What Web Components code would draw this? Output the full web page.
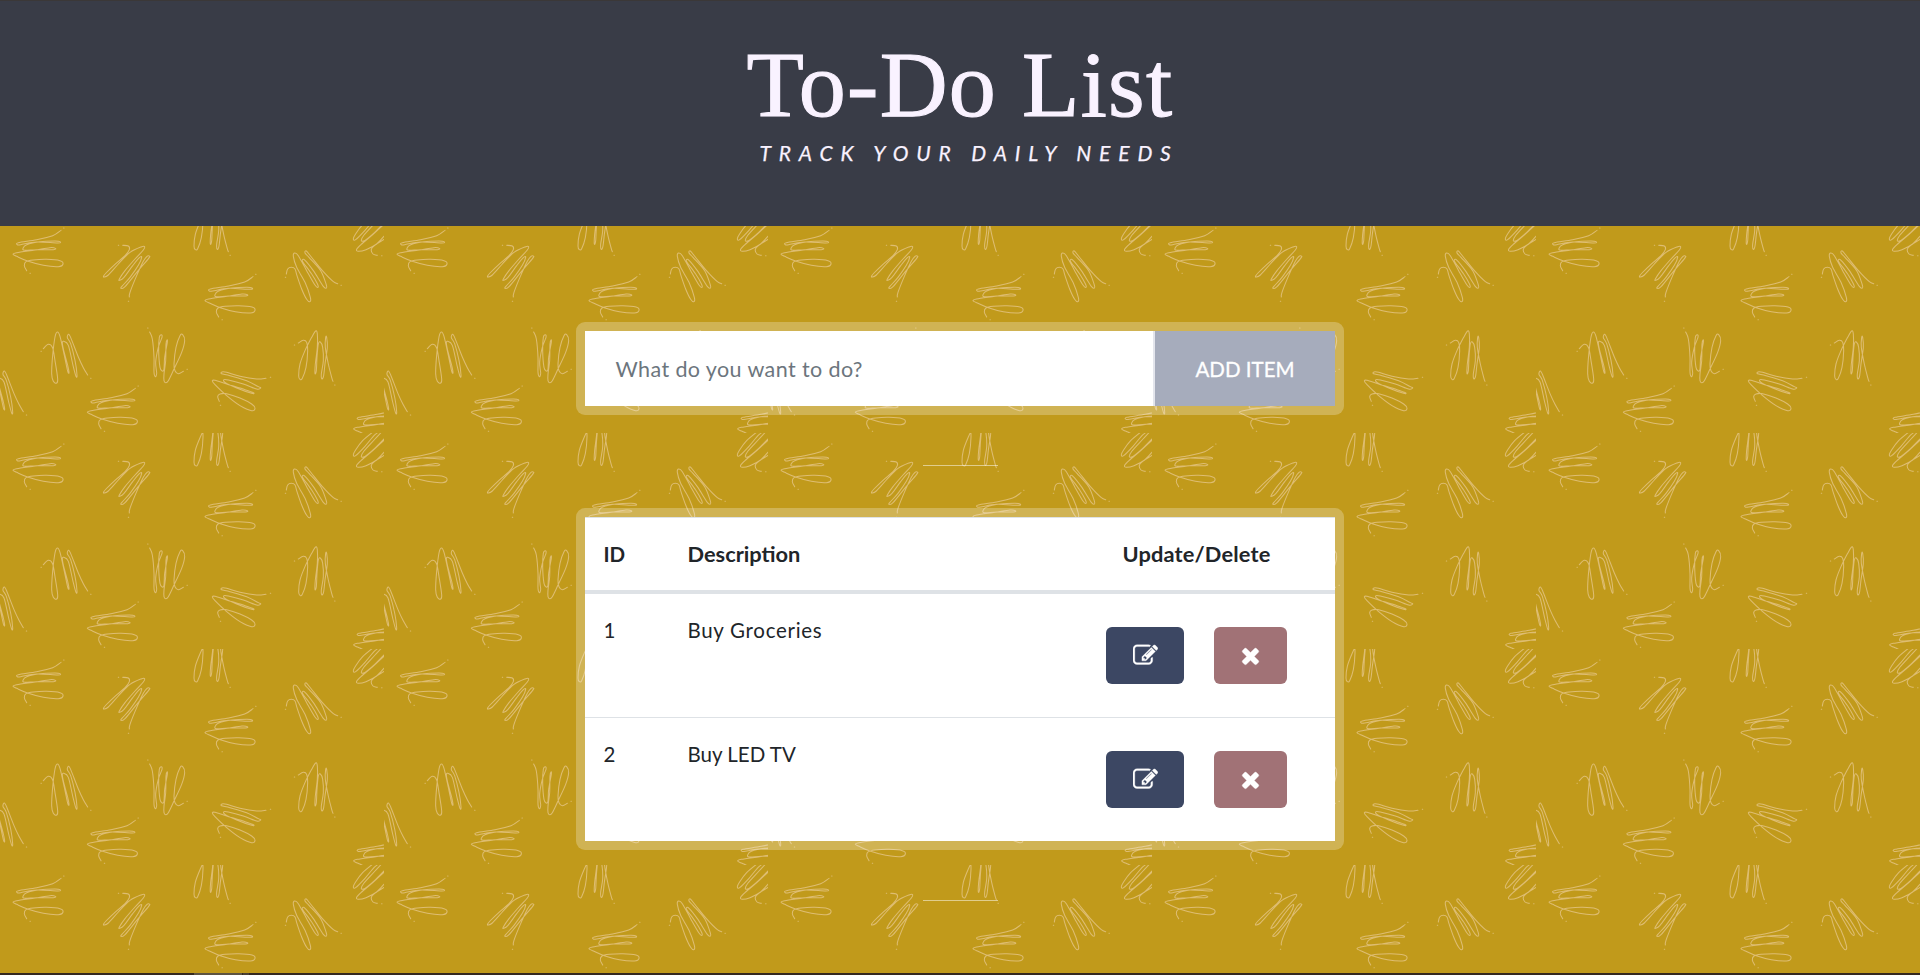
<!DOCTYPE html>
<html lang="en">
<head>
<meta charset="utf-8">
<title>To-Do List</title>
<style>
html,body{margin:0;height:100%;overflow:hidden}
body{font-family:Lato,"Noto Sans",sans-serif;font-size:20.5px;color:#212529}
</style>
</head>
<body>
<todo-app></todo-app>
<script>
// Scribble motifs: points are in thirds of a pixel; "dots" are the stray ink specks.
const MOTIFS = {
  flat: {dots:[[191,33],[90,169]], pts:[183,40,158,56,110,68,55,77,52,83,62,83,110,75,174,78,180,74,165,72,120,74,80,83,69,94,74,100,110,98,160,98,166,94,150,92,105,99,50,107,39,112,50,118,85,133,130,145,175,149,189,141,180,131,140,127,100,129,78,134,73,146,80,161]},
  tall: {dots:[[123,403],[272,484]], pts:[130,395,145,382,158,393,165,431,173,485,170,498,160,493,155,470,158,415,165,360,172,345,180,358,193,415,203,462,207,467,203,445,191,400,187,378,191,373,205,385,219,445,228,478,231,474,225,430,212,380,202,362,206,352,213,364,235,420,250,452,263,474]},
  slant: {dots:[[355,85],[385,253]], pts:[368,85,385,87,388,98,375,116,345,142,318,168,311,177,312,180,325,174,355,141,390,106,425,89,434,89,430,99,405,126,375,161,358,186,359,190,372,181,398,146,418,122,425,121,415,145,390,181,365,209,364,214,375,209,412,164,446,124,448,117,441,118,430,133,410,176,390,226,388,240]},
  lean: {dots:[[856,181],[1023,205]], pts:[859,171,863,156,874,151,885,156,891,176,905,216,920,247,930,254,931,241,915,196,890,151,880,118,884,108,895,116,920,161,945,204,954,211,952,200,935,171,910,137,907,129,915,130,940,161,970,208,979,213,979,204,962,161,927,121,915,108,919,102,934,120,970,164,1000,194,1013,200]},
  upright: {dots:[[883,384],[1004,504]], pts:[895,378,910,370,920,376,923,401,918,451,907,484,900,487,896,476,900,441,915,401,935,361,947,342,952,351,952,391,946,441,945,470,949,461,951,421,955,381,961,375,968,391,970,431,964,471,966,486,971,476,975,441,982,391,980,361,977,361,976,391,985,441,995,481,999,493]},
  fan: {dots:[[811,481],[661,565]], pts:[798,484,770,486,720,478,680,466,666,465,665,470,690,476,740,491,775,509,782,513,770,516,730,501,685,489,672,488,675,496,710,513,755,529,760,527,735,518,680,501,645,490,637,492,645,503,680,536,720,566,755,581,765,574,755,561,720,543,680,530,660,531,653,539,658,553]},
  flipped: {dots:[[443,333],[561,457]], pts:[449,345,457,366,462,421,462,466,466,479,470,469,467,436,475,391,486,361,484,353,478,361,476,401,480,451,487,462,492,456,494,421,502,376,501,369,498,381,497,431,492,471,492,491,497,497,505,491,522,456,545,406,554,371,548,353,540,356,528,391,522,441,525,461,535,470,550,463]},
  corner: {dots:[[1145,116]], pts:[1132,115,1119,111,1114,97,1125,84,1160,62,1175,48,1160,50,1130,81,1098,98,1075,103,1070,97,1085,81,1120,51,1170,5,1160,10,1120,50,1095,70,1084,71,1092,54,1125,18,1150,-10,1125,5,1095,40,1067,68,1060,66,1065,54,1088,23,1130,-12]}
};
const PLACES = [['flat',0,0],['flat',576,139],['flat',223,474],['flat',1022,524],['tall',0,0],['tall',-193,110],['slant',0,0],['lean',0,0],['upright',0,0],['upright',-314,-389],['fan',0,0],['flipped',0,0],['corner',0,0]];

// Catmull-Rom spline through a flat list of coordinates.
function smooth(p){
  const n=p.length/2, at=i=>{i=Math.max(0,Math.min(n-1,i));return [p[2*i],p[2*i+1]]};
  let d='M'+at(0);
  for(let i=0;i<n-1;i++){
    const a=at(i-1),b=at(i),c=at(i+1),e=at(i+2);
    d+='C'+[b[0]+(c[0]-a[0])/6,b[1]+(c[1]-a[1])/6,c[0]-(e[0]-b[0])/6,c[1]-(e[1]-b[1])/6,c[0],c[1]].map(v=>v.toFixed(1));
  }
  return d;
}
function define(name, html){
  const t=document.createElement('template'); t.innerHTML=html;
  customElements.define(name, class extends HTMLElement{
    constructor(){super();this.attachShadow({mode:'open'}).append(t.content.cloneNode(true));}
  });
}

define('scribble-wall', `<style>
:host{display:block;position:absolute;inset:0;background:#c19a1b;z-index:-1}
svg{display:block;width:100%;height:100%}
</style><svg aria-hidden="true"><defs><pattern id="p" x="0" y="1" width="384" height="216" patternUnits="userSpaceOnUse"><g transform="scale(.333333)" fill="none" stroke="#f5d8b4" stroke-opacity=".56" stroke-width="3.1" stroke-linecap="round">
${PLACES.map(([k,x,y])=>`<g transform="translate(${x} ${y})"><path d="${smooth(MOTIFS[k].pts)}"/>${MOTIFS[k].dots.map(d=>`<path d="M${d}h1"/>`).join('')}</g>`).join('')}
</g></pattern></defs><rect width="100%" height="100%" fill="url(#p)"/></svg>`);

define('page-banner', `<style>
:host{display:block;box-sizing:border-box;height:226px;background:#393c47;border-top:1px solid #3b3838;color:#f9f2ff;text-align:center;padding-top:31px}
h1{margin:0;font:400 94px/104px "Liberation Serif",serif;letter-spacing:1.3px;-webkit-text-stroke:1.1px #f9f2ff}
p{margin:3px 0 0;padding-left:18px;font-size:21px;line-height:28px;font-style:italic;text-transform:uppercase;letter-spacing:7.85px;-webkit-text-stroke:.25px #f9f2ff}
</style><h1><slot></slot></h1><p><slot name="tagline"></slot></p>`);

define('glass-frame', `<style>
:host{display:block;box-sizing:border-box;width:768px;padding:9px;border-radius:9px;background:rgba(255,255,255,.25)}
</style><slot></slot>`);

define('short-rule', `<style>:host{display:block;width:75px;height:1px;background:rgba(255,255,255,.5)}</style>`);

define('add-form', `<style>
:host{display:flex;height:75px}
.field{flex:1;background:#fff;border-right:2px solid #e3e5ec;padding-left:30.5px;color:#6c757d;font-size:21.5px;letter-spacing:.4px;line-height:76px}
.add{width:180px;background:#a6acbc;color:#fff;text-align:center;font-size:20.5px;line-height:76px;-webkit-text-stroke:.3px #fff}
</style><div class="field"><span>What do you want to do?</span></div><div class="add"><span>ADD ITEM</span></div>`);

define('icon-button', `<style>
:host{display:flex;align-items:flex-start;justify-content:center;box-sizing:border-box;height:57px;padding-top:16px;border-radius:6px;width:78px;background:#3c4763}
:host([kind=delete]){width:73px;background:#a17276}
svg{width:25px;height:25px;fill:#fff;stroke:#fff;stroke-width:24}
:host([kind=delete]) .edit,:host([kind=edit]) .del{display:none}
</style><svg viewBox="0 0 1792 1792"><path class="edit" d="M888 1184l116-116-152-152-116 116v56h96v96h56zm440-720q-16-16-33 1l-350 350q-17 17-1 33t33-1l350-350q17-17 1-33zm80 594v190q0 119-84.5 203.5t-203.5 84.5h-832q-119 0-203.5-84.5t-84.5-203.5v-832q0-119 84.5-203.5t203.5-84.5h832q63 0 117 25 15 7 18 23 3 17-9 29l-49 49q-14 14-32 8-23-6-45-6h-832q-66 0-113 47t-47 113v832q0 66 47 113t113 47h832q66 0 113-47t47-113v-126q0-13 9-22l64-64q15-15 35-7t20 29zm-96-738l288 288-672 672h-288v-288zm444 132l-92 92-288-288 92-92q28-28 68-28t68 28l152 152q28 28 28 68t-28 68z"/><path class="del" d="M1490 1322q0 40-28 68l-136 136q-28 28-68 28t-68-28l-294-294-294 294q-28 28-68 28t-68-28l-136-136q-28-28-28-68t28-68l294-294-294-294q-28-28-28-68t28-68l136-136q28-28 68-28t68 28l294 294 294-294q28-28 68-28t68 28l136 136q28 28 28 68t-28 68l-294 294 294 294q28 28 28 68z"/></svg>`);

define('todo-row', `<style>
:host{display:grid;grid-template-columns:84px 1fr 276px;box-sizing:border-box;height:123px;padding-left:18.5px;background:#fff;line-height:30px}
:host([ruled]){height:124px;border-top:1px solid #dee2e6}
.t{padding-top:21px;letter-spacing:var(--tracking,0)}
.n{letter-spacing:0}
.acts{display:flex;gap:30px;padding:33px 0 0 47px}
</style><div class="t n"><slot name="id"></slot></div><div class="t"><slot></slot></div><div class="acts"><icon-button kind="edit"></icon-button><icon-button kind="delete"></icon-button></div>`);

define('todo-table', `<style>
:host{display:block}
.head{display:grid;grid-template-columns:84px 1fr 276px;box-sizing:border-box;height:77px;padding:21px 0 0 18.5px;background:#fff;border-top:1px solid #dee2e6;border-bottom:4px solid #dee2e6;font-weight:700;line-height:30px}
.wide{font-size:21.8px}
.last{padding-left:63.5px;letter-spacing:.15px}
</style><div class="head"><span>ID</span><span class="wide">Description</span><span class="wide last">Update/Delete</span></div><slot></slot>`);

define('desk-edge', `<style>
:host{display:flex;height:2px;background:#35291f;padding-left:194px}
i{width:48px;background:#5d5341}i+i{width:6px;margin-left:1px;background:#4a4034}
</style><i></i><i></i>`);

define('todo-app', `<style>
:host{display:flex;flex-direction:column;height:975px;position:relative;z-index:0}
main{flex:1;display:flex;flex-direction:column;align-items:center;padding-top:96px}
short-rule{margin:50px 0 42px}
.loose{--tracking:.7px}
</style><scribble-wall></scribble-wall>
<page-banner>To-Do List<span slot="tagline">Track your daily needs</span></page-banner>
<main>
<glass-frame><add-form></add-form></glass-frame>
<short-rule></short-rule>
<glass-frame><todo-table>
<todo-row class="loose"><span slot="id">1</span><span>Buy Groceries</span></todo-row>
<todo-row ruled><span slot="id">2</span><span>Buy LED TV</span></todo-row>
</todo-table></glass-frame>
<short-rule></short-rule>
</main>
<desk-edge></desk-edge>`);
</script>
</body>
</html>
